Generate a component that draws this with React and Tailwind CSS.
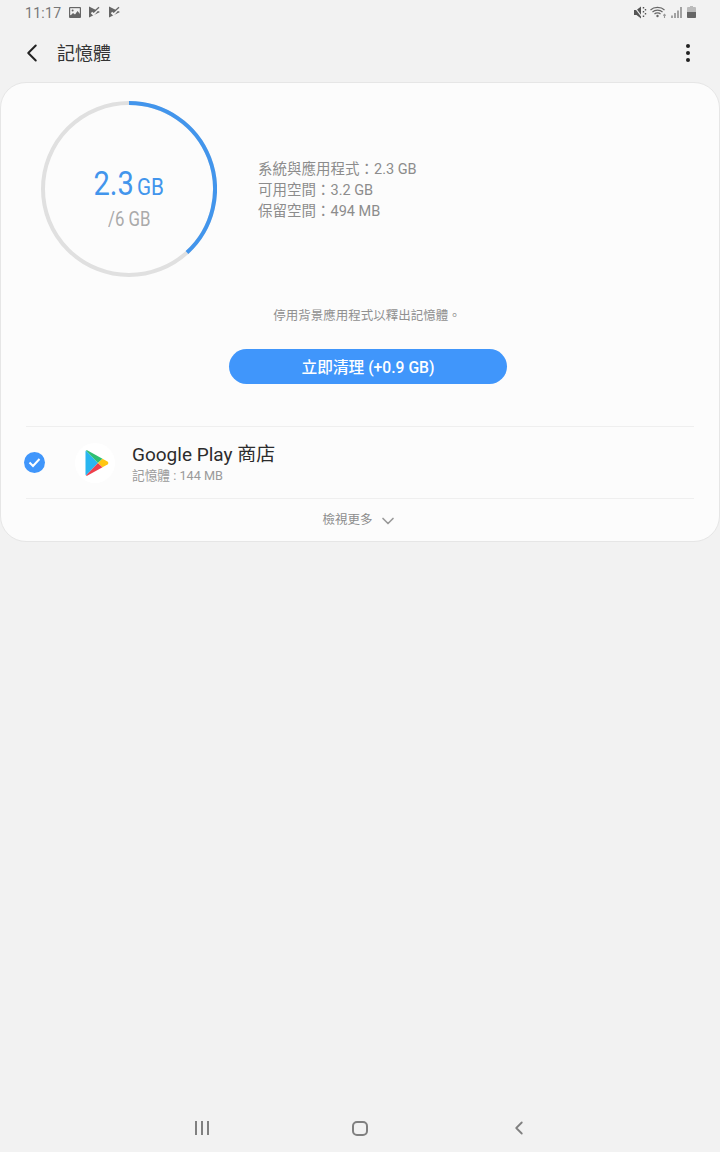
import React from "react";
import { ChevronDown, ChevronLeft } from "lucide-react";

const font = "font-['Roboto','Noto_Sans_CJK_TC',sans-serif]";

const NotifyIcon = ({ className }) => (
  <svg width="11" height="12" viewBox="0 0 11 12" className={className}>
    <path d="M0 0.5L11 6 0 11.5z" fill="#666" />
    <path d="M2.5 6.5l2 2 5.5-6.5" fill="none" stroke="#f2f2f2" strokeWidth="2" />
    <path d="M4.5 6.2l5.5-5" fill="none" stroke="#666" strokeWidth="1.3" />
  </svg>
);

const StatusLeft = () => (
  <div className="flex items-center pl-[25px]">
    <span className="text-[14px] leading-6 mt-[1px] tracking-[0.3px] text-[#777]">11:17</span>
    <svg width="12" height="11" viewBox="0 0 12 11" className="ml-[8px]">
      <rect width="12" height="11" rx="1" fill="#666" />
      <rect x="1.2" y="1.2" width="9.6" height="7" fill="#f2f2f2" />
      <circle cx="3.6" cy="3.5" r="1" fill="#666" />
      <path d="M1 9l3-3 2 1.5L8.5 4l2.5 3v3H1z" fill="#666" />
    </svg>
    <NotifyIcon className="ml-[8px]" />
    <NotifyIcon className="ml-[9px]" />
  </div>
);

const StatusRight = () => (
  <div className="flex items-center gap-[3px] pr-[24px]">
    <svg width="13" height="13" viewBox="0 0 13 13">
      <path d="M0 4h2.5L7 0.5v12L2.5 9H0z" fill="#555" />
      <path d="M0.5 1l7.5 10" stroke="#f2f2f2" strokeWidth="1.2" />
      <path d="M9.5 1v1.5M11.5 3v1.5M9.5 5v1.5M11.5 7v1.5M9.5 9.5V11" stroke="#555" strokeWidth="1.4" />
    </svg>
    <svg width="17" height="13" viewBox="0 0 17 13" fill="none" stroke="#666" strokeWidth="1.1">
      <path d="M0.5 4C4 0.5 11 0.5 14.5 4" />
      <path d="M2.5 6C5 3.5 10 3.5 12.5 6" />
      <path d="M4.5 8C6 6.5 9 6.5 10.5 8" />
      <circle cx="7.5" cy="10" r="1.2" fill="#666" stroke="none" />
      <path d="M14.5 12V8.5M13.3 9.6l1.2-1.2 1.2 1.2" stroke="#999" />
    </svg>
    <svg width="12" height="12" viewBox="0 0 12 12" className="ml-[1px]">
      <path d="M1 12V9.5M4 12V7M7 12V4.5M10 12V1" stroke="#777" strokeWidth="1.3" />
    </svg>
    <svg width="9" height="12" viewBox="0 0 9 12" className="ml-[1px]">
      <path d="M3 0h3v1h2a1 1 0 0 1 1 1v9a1 1 0 0 1-1 1H1a1 1 0 0 1-1-1V2a1 1 0 0 1 1-1h2z" fill="#bbb" />
      <path d="M0 6h9v5a1 1 0 0 1-1 1H1a1 1 0 0 1-1-1z" fill="#666" />
    </svg>
  </div>
);

const Ring = () => (
  <div className="relative w-[176px] h-[176px] shrink-0">
    <svg width="176" height="176" viewBox="0 0 176 176">
      <circle cx="88" cy="88" r="86" fill="none" stroke="#e0e0e0" strokeWidth="4" />
      <path d="M88 2A86 86 0 0 1 146 151.5" fill="none" stroke="#4295ec" strokeWidth="4" />
    </svg>
    <div className="absolute inset-0 flex flex-col items-center justify-center pt-[17px]">
      <div className="flex items-baseline text-[#4295ec] leading-[36px] -ml-[3px]">
        <span className="text-[33px] scale-x-[0.88] origin-right">2.3</span>
        <span className="text-[24px] ml-[3px] mr-[-2px] scale-x-[0.86] origin-left">GB</span>
      </div>
      <div className="text-[20px] leading-[22px] mt-[3px] text-[#aaa] scale-x-[0.84]">/6 GB</div>
    </div>
  </div>
);

const PlayIcon = () => (
  <svg width="24" height="26" viewBox="0 0 24 26">
    <path d="M1 0.5L13 13 1 25.5C0.7 25.2 0.5 24.8 0.5 24.3V1.7C0.5 1.2 0.7 0.8 1 0.5z" fill="#29b6f0" />
    <path d="M1 0.5c.4-.3 1-.3 1.6 0L17.5 8.7 13 13z" fill="#2fbf71" />
    <path d="M1 25.5c.4.3 1 .3 1.6 0L17.5 17.3 13 13z" fill="#ee3f4c" />
    <path d="M17.5 8.7l5 2.8c1.1.7 1.1 2.3 0 3l-5 2.8L13 13z" fill="#ffc512" />
  </svg>
);

const App = () => {
  return (
    <div className={`${font} flex flex-col min-h-screen bg-[#f2f2f2]`}>
      <div className="flex justify-between items-center h-6">
        <StatusLeft />
        <StatusRight />
      </div>

      <header className="flex items-center h-[58px]">
        <ChevronLeft className="w-[30px] h-[30px] ml-[17px] text-[#222]" strokeWidth={1.6} />
        <h1 className="ml-[10px] text-[18px] text-[#333]">記憶體</h1>
        <div className="ml-auto mr-[30px] flex flex-col gap-[3px]">
          <span className="w-[4px] h-[4px] rounded-full bg-[#222]" />
          <span className="w-[4px] h-[4px] rounded-full bg-[#222]" />
          <span className="w-[4px] h-[4px] rounded-full bg-[#222]" />
        </div>
      </header>

      <main className="bg-[#fcfcfc] rounded-[26px] border border-[#e6e6e6] h-[460px] pt-[18px]">
        <div className="flex items-center pl-[40px] gap-[41px]">
          <Ring />
          <div className="text-[14.5px] leading-[21px] pt-[2px] text-[#8c8c8c]">
            <p>系統與應用程式：2.3 GB</p>
            <p>可用空間：3.2 GB</p>
            <p>保留空間：494 MB</p>
          </div>
        </div>

        <p className="mt-[31px] mb-[-1px] text-center pl-[14px] text-[12.5px] leading-4 text-[#909090]">
          停用背景應用程式以釋出記憶體。
        </p>

        <div className="flex mt-[26px] pl-[228px]">
          <button className="w-[278px] h-[35px] pt-[2px] rounded-full bg-[#4096fb] text-white text-[15.7px] font-medium">
            立即清理 (+0.9 GB)
          </button>
        </div>

        <div className="mt-[42px] mx-[25px] border-t border-[#efefef] h-[72px] flex items-center">
          <div className="w-[21px] h-[21px] -ml-[2px] rounded-full bg-[#4096fb] flex items-center justify-center">
            <svg width="13" height="11" viewBox="0 0 13 11" fill="none" stroke="#fff" strokeWidth="2">
              <path d="M1.5 5.5l3.5 3.5 6.5-7" />
            </svg>
          </div>
          <div className="w-10 h-10 ml-[30px] pl-[4px] rounded-full bg-white flex items-center justify-center">
            <PlayIcon />
          </div>
          <div className="ml-[17px] mt-[2px]">
            <div className="text-[19px] leading-[24px] text-[#2c2c2c]">Google Play 商店</div>
            <div className="text-[12.7px] leading-[16px] mt-[1px] text-[#9a9a9a]">記憶體 : 144 MB</div>
          </div>
        </div>

        <div className="mx-[25px] border-t border-[#efefef] h-[43px] pt-[1px] flex items-center justify-center text-[12.5px] text-[#8c8c8c]">
          <span>檢視更多</span>
          <ChevronDown className="w-[20px] h-[20px] ml-[5px] text-[#999]" strokeWidth={2} />
        </div>
      </main>

      <nav className="mt-auto h-[32px] flex items-start">
        <div className="flex gap-[4px] ml-[195px] mt-[1px]">
          <span className="w-[2px] h-[14px] bg-[#808080]" />
          <span className="w-[2px] h-[14px] bg-[#808080]" />
          <span className="w-[2px] h-[14px] bg-[#808080]" />
        </div>
        <div className="w-[16px] h-[15px] ml-[143px] mt-[1px] rounded-[5px] border-2 border-[#808080]" />
        <ChevronLeft className="w-[22px] h-[22px] ml-[140px] -mt-[3px] text-[#808080]" strokeWidth={2} />
      </nav>
    </div>
  );
};

export default App;
